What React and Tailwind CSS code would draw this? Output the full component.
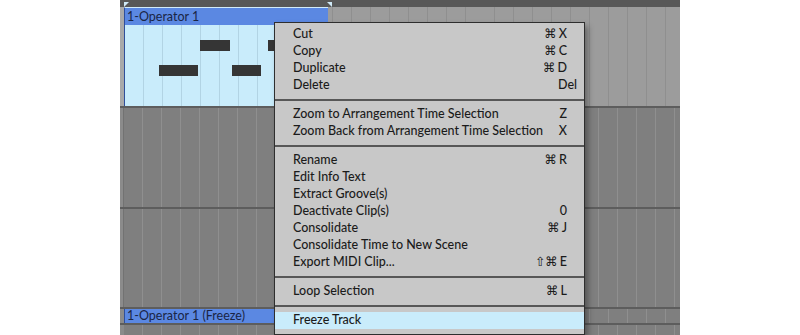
import React from 'react';

const gridTrack =
  'bg-[repeating-linear-gradient(90deg,transparent_0,transparent_18px,#8f8f8f_18px,#8f8f8f_19px,transparent_19px,transparent_18.8px)]';

const menuGroups = [
  [
    { label: 'Cut', mod: '⌘', key: 'X' },
    { label: 'Copy', mod: '⌘', key: 'C' },
    { label: 'Duplicate', mod: '⌘', key: 'D' },
    { label: 'Delete', key: 'Del', wide: true },
  ],
  [
    { label: 'Zoom to Arrangement Time Selection', key: 'Z' },
    { label: 'Zoom Back from Arrangement Time Selection', key: 'X' },
  ],
  [
    { label: 'Rename', mod: '⌘', key: 'R' },
    { label: 'Edit Info Text' },
    { label: 'Extract Groove(s)' },
    { label: 'Deactivate Clip(s)', key: '0' },
    { label: 'Consolidate', mod: '⌘', key: 'J' },
    { label: 'Consolidate Time to New Scene' },
    { label: 'Export MIDI Clip...', mod: '⇧⌘', key: 'E' },
  ],
  [{ label: 'Loop Selection', mod: '⌘', key: 'L' }],
  [{ label: 'Freeze Track', active: true }],
];

function Marker() {
  return (
    <svg width="5" height="5" viewBox="0 0 5 5">
      <path d="M0 0H5L0 5Z" fill="#cfe9f7" />
    </svg>
  );
}

function MenuRow({ item }) {
  return (
    <div
      className={`flex items-center h-[17px] pl-[18px] ${item.wide ? 'pr-[7px]' : 'pr-[17px]'} ${
        item.active ? 'bg-[#c9ecfb]' : ''
      }`}
    >
      <span className="flex-1 whitespace-nowrap">{item.label}</span>
      {item.mod && (
        <span className="text-[12.5px] font-normal mr-[2px] font-['DejaVu_Sans',sans-serif]">{item.mod}</span>
      )}
      {item.key && <span className="whitespace-nowrap">{item.key}</span>}
    </div>
  );
}

function ContextMenu() {
  return (
    <div className="absolute left-[274px] top-[22px] w-[311px] bg-[#c8c8c8] border border-[#2e2e2e] pt-[3px] pb-[5px] text-[12.5px] font-medium text-[#1b1b1b] font-['Lato',sans-serif] shadow-[3px_4px_6px_rgba(0,0,0,0.35)]">
      {menuGroups.map((group, i) => (
        <div key={i}>
          {i > 0 && <div className="h-[2px] my-[5px] bg-[#575757]" />}
          {group.map((item) => (
            <MenuRow key={item.label} item={item} />
          ))}
        </div>
      ))}
    </div>
  );
}

export default function App() {
  return (
    <div className="relative w-[800px] h-[335px] bg-white overflow-hidden flex font-['Lato',sans-serif]">
      <div className="w-[120px]" />
      <div className="w-[560px] flex flex-col bg-[#7f7f7f]">
        {/* top ruler strip */}
        <div className="h-[7px] bg-[#585858] flex items-start pt-[2px]">
          <div className="ml-[4px]">
            <Marker />
          </div>
          <div className="ml-[198px] -scale-x-100">
            <Marker />
          </div>
        </div>

        {/* track 1 with clip */}
        <div className="h-[99px] flex bg-[#9c9c9c]">
          <div className="w-[4px] bg-[#a9a9a9]" />
          <div className="w-[204px] flex flex-col border-l border-[#2f4f9a] border-t border-t-[#d3ecfa]">
            <div className="h-[17px] bg-[#5b88e2] text-[12.5px] text-[#1a2545] pl-[2px] leading-[17px]">1-Operator 1</div>
            <div className="flex-1 relative bg-[#c9ecfb] bg-[repeating-linear-gradient(90deg,transparent_0,transparent_18px,#b2d4e4_18px,#b2d4e4_19px,transparent_19px,transparent_18.8px)]">
              <div className="absolute left-[75px] top-[15px] w-[30px] h-[11px] bg-[#353535]" />
              <div className="absolute left-[143px] top-[15px] w-[30px] h-[11px] bg-[#353535]" />
              <div className="absolute left-[34px] top-[40px] w-[39px] h-[11px] bg-[#353535]" />
              <div className="absolute left-[107px] top-[40px] w-[29px] h-[11px] bg-[#353535]" />
            </div>
          </div>
          <div className={`flex-1 ${gridTrack} bg-[position:-204px_0]`} />
        </div>
        <div className="h-[2px] bg-[#5d5d5d]" />

        {/* track 2 */}
        <div className="h-[99px] flex">
          <div className="w-[4px] bg-[#8b8b8b] border-r border-[#727272]" />
          <div className={`flex-1 ${gridTrack} bg-[#7f7f7f]`} />
        </div>
        <div className="h-[2px] bg-[#5d5d5d]" />

        {/* track 3 */}
        <div className="h-[98px] flex">
          <div className="w-[4px] bg-[#8b8b8b] border-r border-[#727272]" />
          <div className={`flex-1 ${gridTrack} bg-[#7f7f7f]`} />
        </div>
        <div className="h-[2px] bg-[#5d5d5d]" />

        {/* freeze lane */}
        <div className="h-[14px] flex">
          <div className="w-[4px] bg-[#8b8b8b]" />
          <div className="w-[204px] bg-[#5b88e2] border-l border-[#2f4f9a] text-[12.5px] text-[#1a2545] pl-[2px] leading-[14px] whitespace-nowrap overflow-hidden">
            1-Operator 1 (Freeze)
          </div>
          <div className={`flex-1 ${gridTrack} bg-[position:-204px_0]`} />
        </div>
        <div className="h-[2px] bg-[#5d5d5d]" />
        <div className="flex-1 flex">
          <div className="w-[4px] bg-[#8b8b8b]" />
          <div className={`flex-1 ${gridTrack}`} />
        </div>
      </div>
      <ContextMenu />
    </div>
  );
}
